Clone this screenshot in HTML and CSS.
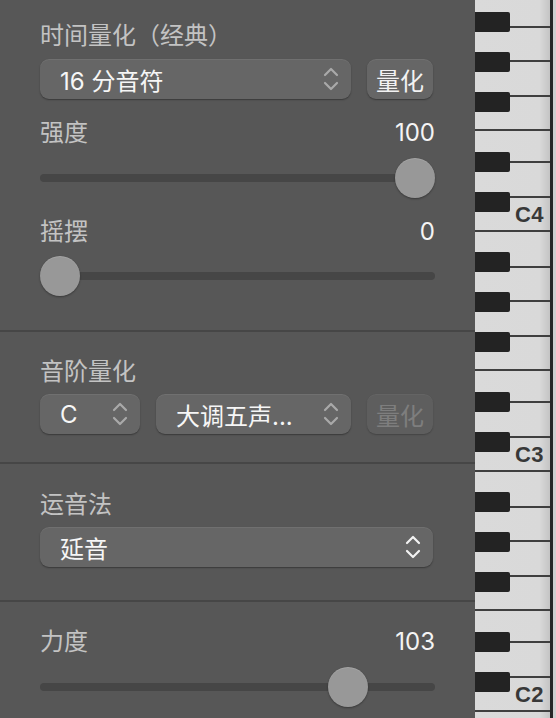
FILE: index.html
```html
<!DOCTYPE html>
<html lang="zh-CN">
<head>
<meta charset="utf-8">
<title>量化</title>
<link rel="stylesheet" href="styles.css">
</head>
<body>
<div class="app">
  <div class="panel">
    <section class="sec sec-time">
      <div class="label">时间量化（经典）</div>
      <div class="ctl-row">
        <div class="select grow"><span>16 分音符</span>
          <svg class="chev" viewBox="0 0 16 24"><path d="M2 8 L8 2 L14 8 M2 16 L8 22 L14 16"/></svg>
        </div>
        <div class="btn">量化</div>
      </div>
      <div class="val-row"><span class="label">强度</span><span class="val">100</span></div>
      <div class="slider"><div class="track"></div><div class="thumb" style="--v:1"></div></div>
      <div class="val-row row-swing"><span class="label">摇摆</span><span class="val">0</span></div>
      <div class="slider slider-swing"><div class="track"></div><div class="thumb" style="--v:0"></div></div>
    </section>
    <div class="sep"></div>
    <section class="sec sec-scale">
      <div class="label">音阶量化</div>
      <div class="ctl-row">
        <div class="select key"><span>C</span>
          <svg class="chev" viewBox="0 0 16 24"><path d="M2 8 L8 2 L14 8 M2 16 L8 22 L14 16"/></svg>
        </div>
        <div class="select grow"><span>大调五声...</span>
          <svg class="chev" viewBox="0 0 16 24"><path d="M2 8 L8 2 L14 8 M2 16 L8 22 L14 16"/></svg>
        </div>
        <div class="btn disabled">量化</div>
      </div>
    </section>
    <div class="sep"></div>
    <section class="sec sec-artic">
      <div class="label">运音法</div>
      <div class="ctl-row">
        <div class="select grow bright"><span>延音</span>
          <svg class="chev" viewBox="0 0 16 24"><path d="M2 8 L8 2 L14 8 M2 16 L8 22 L14 16"/></svg>
        </div>
      </div>
    </section>
    <div class="sep"></div>
    <section class="sec sec-vel">
      <div class="val-row"><span class="label">力度</span><span class="val">103</span></div>
      <div class="slider"><div class="track"></div><div class="thumb" style="--v:0.811"></div></div>
    </section>
  </div>
  <div class="piano">
    <div class="keys">
      <div class="octave first">
        <div class="wk h36"></div><div class="wk h34"></div><div class="wk h35"></div><div class="wk h34"></div><div class="wk h32"></div><div class="wk h35"></div><div class="wk h34 c"><span>C4</span></div>
        <div class="bk b1"></div><div class="bk b2"></div><div class="bk b3"></div><div class="bk b4"></div><div class="bk b5"></div>
      </div>
      <div class="octave">
        <div class="wk h36"></div><div class="wk h34"></div><div class="wk h35"></div><div class="wk h34"></div><div class="wk h32"></div><div class="wk h35"></div><div class="wk h34 c"><span>C3</span></div>
        <div class="bk b1"></div><div class="bk b2"></div><div class="bk b3"></div><div class="bk b4"></div><div class="bk b5"></div>
      </div>
      <div class="octave">
        <div class="wk h36"></div><div class="wk h34"></div><div class="wk h35"></div><div class="wk h34"></div><div class="wk h32"></div><div class="wk h35"></div><div class="wk h34 c"><span>C2</span></div>
        <div class="bk b1"></div><div class="bk b2"></div><div class="bk b3"></div><div class="bk b4"></div><div class="bk b5"></div>
      </div>
      <div class="octave">
        <div class="wk h36"></div><div class="wk h34"></div><div class="wk h35"></div>
        <div class="bk b1"></div><div class="bk b2"></div><div class="bk b3"></div>
      </div>
    </div>
    <div class="edge-dark"></div>
    <div class="edge-light"></div>
  </div>
</div>
</body>
</html>
```

FILE: styles.css
```css
* { box-sizing: border-box; }
html, body { margin: 0; padding: 0; }
body {
  width: 556px;
  height: 718px;
  overflow: hidden;
  background: #575757;
  font-family: "Inter", "Noto Sans CJK SC", sans-serif;
}
.app {
  display: flex;
  width: 556px;
  height: 718px;
}
.panel {
  width: 475px;
  flex: none;
  background: #575757;
  display: flex;
  flex-direction: column;
}
.sec {
  display: flex;
  flex-direction: column;
  padding: 0 40px;
}
.sep {
  height: 2px;
  background: #464646;
  flex: none;
}
.label {
  font-size: 24px;
  line-height: 28px;
  height: 28px;
  color: #c3c3c3;
  white-space: nowrap;
}
.val {
  font-size: 24px;
  line-height: 28px;
  color: #f4f4f4;
}
.val-row {
  display: flex;
  justify-content: space-between;
  align-items: center;
  height: 28px;
}
.ctl-row {
  display: flex;
  gap: 16px;
  height: 40px;
  margin-top: 8px;
  width: 393px;
}
.select {
  position: relative;
  height: 40px;
  border-radius: 9px;
  background: #666666;
  box-shadow: 0 1px 1.5px rgba(0,0,0,0.35), inset 0 1px 0 rgba(255,255,255,0.07);
  display: flex;
  align-items: center;
  padding-left: 20px;
  padding-right: 12px;
  font-size: 24px;
  color: #f6f6f6;
  white-space: nowrap;
}
.select span { flex: 1; }
.select.grow { flex: 1; }
.select.key { width: 100px; flex: none; }
.chev {
  width: 16px;
  height: 24px;
  flex: none;
}
.chev path {
  fill: none;
  stroke: #a9a9a9;
  stroke-width: 2.2;
  stroke-linecap: round;
  stroke-linejoin: round;
}
.bright .chev path { stroke: #f2f2f2; }
.btn {
  width: 66px;
  flex: none;
  height: 40px;
  border-radius: 9px;
  background: #666666;
  box-shadow: 0 1px 1.5px rgba(0,0,0,0.35), inset 0 1px 0 rgba(255,255,255,0.07);
  display: flex;
  align-items: center;
  justify-content: center;
  font-size: 24px;
  color: #f2f2f2;
}
.btn.disabled {
  background: #5e5e5e;
  color: #7e7e7e;
  box-shadow: 0 1px 1.5px rgba(0,0,0,0.22), inset 0 1px 0 rgba(255,255,255,0.04);
}
.slider {
  position: relative;
  width: 395px;
  height: 40px;
  display: flex;
  align-items: center;
}
.track {
  width: 100%;
  height: 8px;
  border-radius: 4px;
  background: #464646;
}
.thumb {
  position: absolute;
  top: 0;
  left: calc(var(--v) * (100% - 40px));
  width: 40px;
  height: 40px;
  border-radius: 50%;
  background: #989898;
  box-shadow: 0 1px 2px rgba(0,0,0,0.35), inset 0 1px 0 rgba(255,255,255,0.12);
}

/* section spacing */
.sec-time { padding-top: 22px; padding-bottom: 34px; }
.sec-time .ctl-row { margin-top: 9px; }
.sec-time .val-row { margin-top: 20px; }
.sec-time .slider { margin-top: 11px; }
.sec-time .row-swing { margin-top: 20px; }
.sec-time .slider-swing { margin-top: 10px; }
.sec-scale { padding-top: 26px; padding-bottom: 28px; }
.sec-artic { padding-top: 27px; padding-bottom: 33px; }
.sec-vel { padding-top: 26px; }
.sec-vel .slider { margin-top: 11px; }

/* piano */
.piano {
  width: 81px;
  flex: none;
  display: flex;
  height: 718px;
  overflow: hidden;
}
.keys {
  width: 75px;
  flex: none;
  display: flex;
  flex-direction: column;
}
.octave {
  position: relative;
  display: flex;
  flex-direction: column;
  flex: none;
}
.octave.first { margin-top: -8px; }
.wk {
  border-bottom: 2px solid #3f3f3f;
  background: linear-gradient(to right, #dadada 0, #d9d9d9 86%, #c4c4c4 100%);
  display: flex;
  align-items: center;
  justify-content: flex-end;
  padding-right: 6px;
  flex: none;
}
.h36 { height: 36px; }
.h35 { height: 35px; }
.h34 { height: 34px; }
.h32 { height: 32px; }
.wk span {
  font-family: "Liberation Sans", "Inter", sans-serif;
  font-weight: bold;
  font-size: 22px;
  line-height: 22px;
  letter-spacing: 0.5px;
  color: #383838;
  margin-top: 2px;
}
.bk {
  position: absolute;
  left: 0;
  width: 35px;
  height: 20px;
  background: #232323;
  border-radius: 0 2px 2px 0;
}
.b1 { top: 20px; }
.b2 { top: 60px; }
.b3 { top: 100px; }
.b4 { top: 160px; }
.b5 { top: 200px; }
.edge-dark {
  width: 3px;
  flex: none;
  background: #262626;
}
.edge-light {
  width: 3px;
  flex: none;
  background: #cfcfcf;
}
```
